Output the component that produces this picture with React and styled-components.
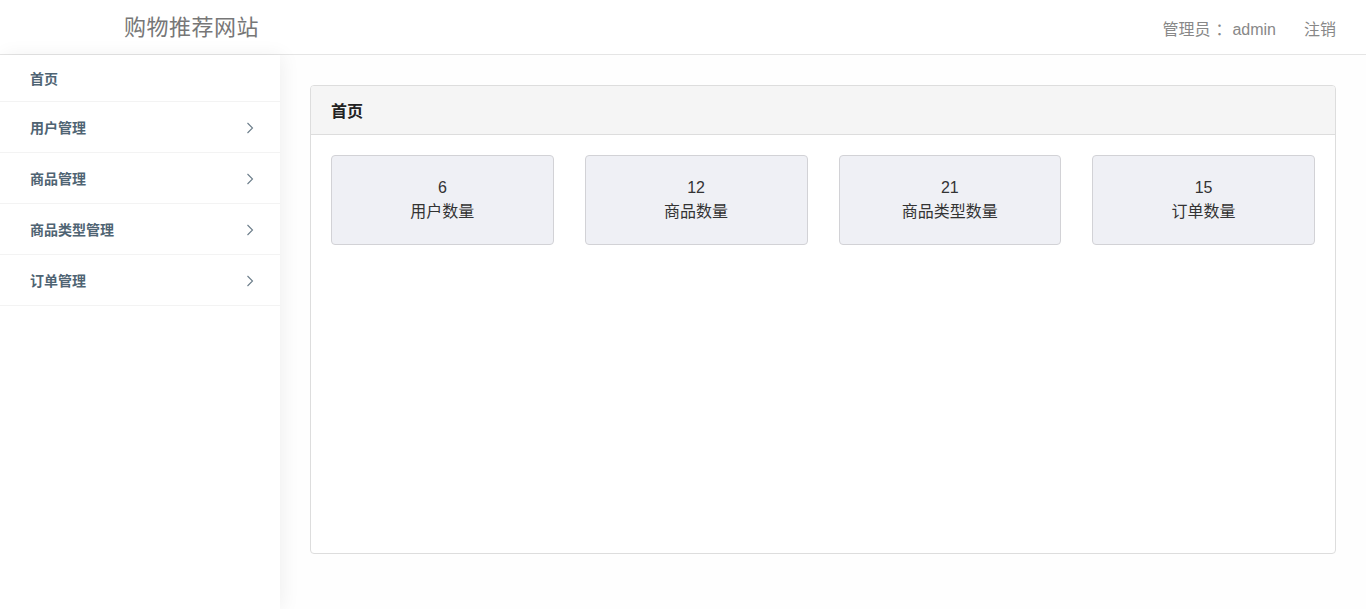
import React from 'react';
import styled, { createGlobalStyle } from 'styled-components';

const GlobalStyle = createGlobalStyle`
  html, body {
    margin: 0;
    padding: 0;
    background: #fff;
    font-family: "Liberation Sans", "Noto Sans CJK SC", sans-serif;
  }
  * { box-sizing: border-box; }
`;

const Page = styled.div`
  width: 1366px;
  height: 609px;
  display: flex;
  flex-direction: column;
  overflow: hidden;
`;

const TopBar = styled.header`
  height: 55px;
  flex: none;
  display: flex;
  align-items: center;
  justify-content: space-between;
  border-bottom: 1px solid #e5e5e5;
  padding: 0 30px 0 124px;
`;

const Brand = styled.div`
  font-size: 22px;
  color: #777;
  letter-spacing: 0.5px;
  margin-top: -4px;
`;

const UserBox = styled.div`
  display: flex;
  gap: 28px;
  font-size: 16px;
  color: #888;
  margin-top: 2px;
`;

const Colon = styled.span`
  display: inline-block;
  width: 22px;
  padding-left: 5px;
  overflow: hidden;
  white-space: nowrap;
  vertical-align: top;
`;

const Body = styled.div`
  flex: 1;
  display: flex;
`;

const Sidebar = styled.nav`
  width: 280px;
  flex: none;
  background: #fff;
  box-shadow: 3px 0 18px rgba(0, 0, 0, 0.06);
  position: relative;
  z-index: 1;
`;

const NavItem = styled.div`
  height: ${(p) => (p.$first ? '47px' : '51px')};
  display: flex;
  align-items: center;
  justify-content: space-between;
  padding: 0 26px 0 30px;
  border-bottom: 1px solid #f3f3f3;
  font-size: 14px;
  font-weight: bold;
  color: #4f6473;
`;

const Chevron = () => (
  <svg width="8" height="12" viewBox="0 0 8 12" fill="none" style={{ marginTop: 2 }}>
    <path d="M1.5 1 L6.5 6 L1.5 11" stroke="#6b7d8a" strokeWidth="1.1" />
  </svg>
);

const Main = styled.main`
  flex: 1;
  padding: 30px 30px 0 30px;
  background: #fefefe;
`;

const Panel = styled.section`
  border: 1px solid #ddd;
  border-radius: 4px;
  background: #fff;
  height: 469px;
  overflow: hidden;
`;

const PanelHead = styled.div`
  height: 49px;
  background: #f5f5f5;
  border-bottom: 1px solid #ddd;
  display: flex;
  align-items: center;
  padding: 0 20px;
  font-size: 16px;
  font-weight: bold;
  color: #222;
`;

const StatGrid = styled.div`
  display: grid;
  grid-template-columns: repeat(4, 1fr);
  gap: 31px;
  padding: 20px;
`;

const StatCard = styled.div`
  height: 90px;
  background: #eff0f5;
  border: 1px solid #d2d2d6;
  border-radius: 4px;
  display: flex;
  flex-direction: column;
  align-items: center;
  justify-content: center;
  font-size: 16px;
  line-height: 24px;
  color: #333;
`;

const menu = [
  { label: '首页', first: true },
  { label: '用户管理' },
  { label: '商品管理' },
  { label: '商品类型管理' },
  { label: '订单管理' },
];

const stats = [
  { value: 6, label: '用户数量' },
  { value: 12, label: '商品数量' },
  { value: 21, label: '商品类型数量' },
  { value: 15, label: '订单数量' },
];

export default function App() {
  return (
    <Page>
      <GlobalStyle />
      <TopBar>
        <Brand>购物推荐网站</Brand>
        <UserBox>
          <span>管理员<Colon>：</Colon>admin</span>
          <span>注销</span>
        </UserBox>
      </TopBar>
      <Body>
        <Sidebar>
          {menu.map((m) => (
            <NavItem key={m.label} $first={m.first}>
              <span>{m.label}</span>
              {!m.first && <Chevron />}
            </NavItem>
          ))}
        </Sidebar>
        <Main>
          <Panel>
            <PanelHead>首页</PanelHead>
            <StatGrid>
              {stats.map((s) => (
                <StatCard key={s.label}>
                  <div>{s.value}</div>
                  <div>{s.label}</div>
                </StatCard>
              ))}
            </StatGrid>
          </Panel>
        </Main>
      </Body>
    </Page>
  );
}
